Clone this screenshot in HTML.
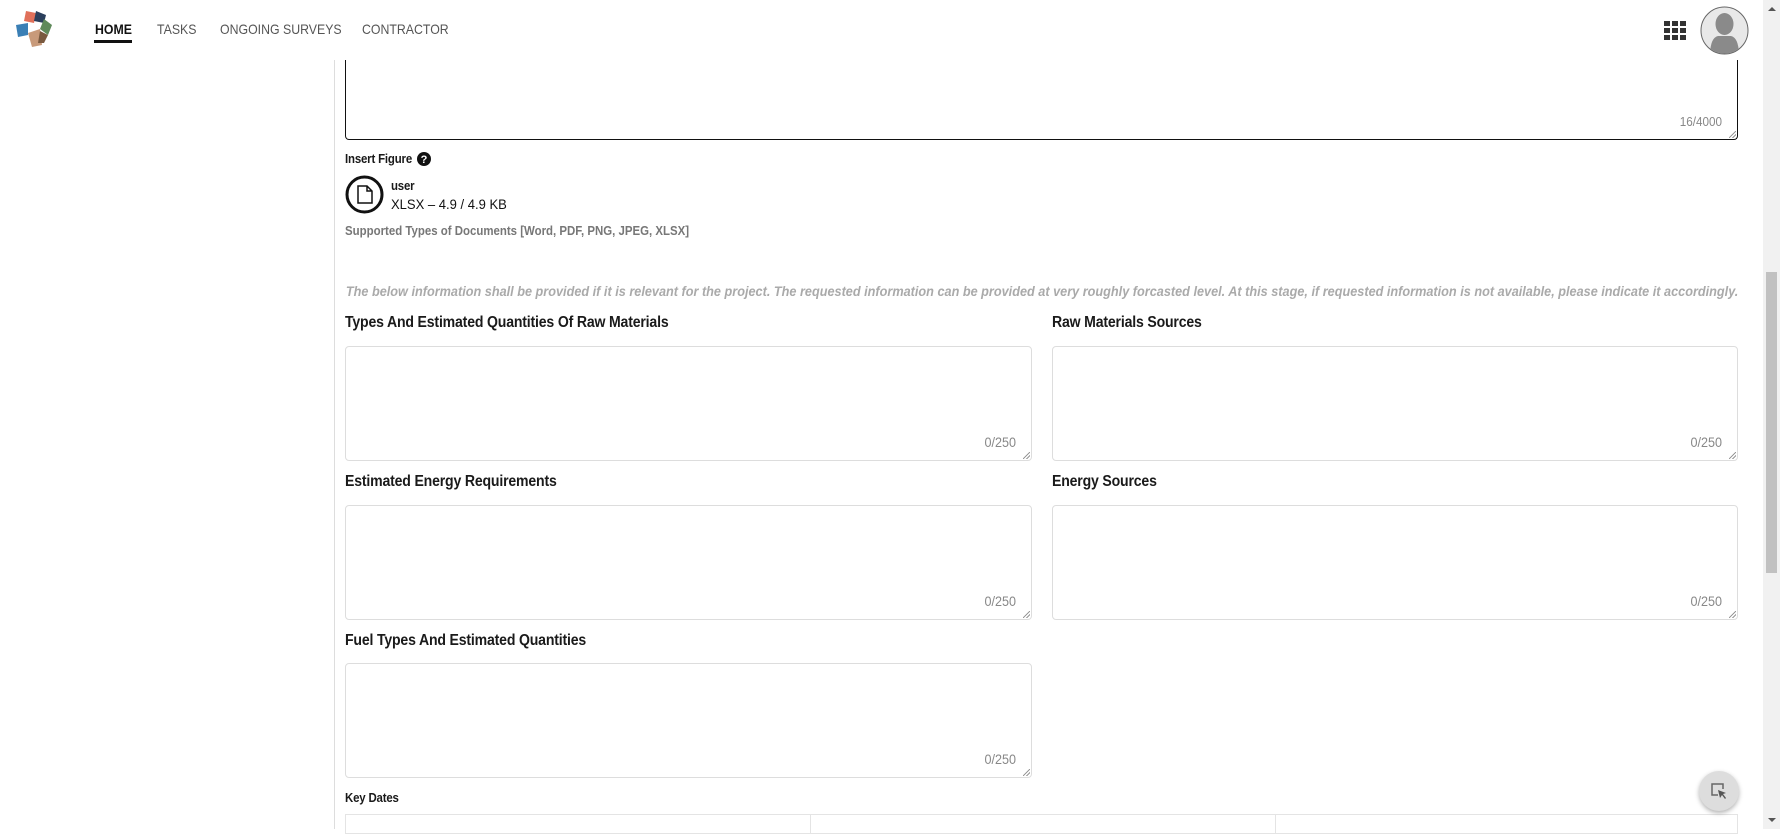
<!DOCTYPE html>
<html><head><meta charset="utf-8"><style>
*{box-sizing:border-box;margin:0;padding:0}
body{width:1780px;height:829px;overflow:hidden;background:#fff;font-family:"Liberation Sans",sans-serif;position:relative;color:#222}
.a{position:absolute;white-space:nowrap}
.n{transform:scaleX(.88);transform-origin:left center}
.nav{font-size:14px;color:#555;top:21px}
.lbl{font-weight:bold;font-size:16px;color:#1a1a1a;letter-spacing:-0.2px}
.ta{position:absolute;border:1px solid #ddd;border-radius:4px;background:#fff}
.cnt{position:absolute;right:15px;bottom:10px;font-size:14px;color:#888;transform:scaleX(.9);transform-origin:right center}
.rs{position:absolute;right:1px;bottom:1px;width:7px;height:7px;background:linear-gradient(135deg,transparent 45%,#999 46%,#999 55%,transparent 56%,transparent 70%,#999 71%,#999 80%,transparent 81%)}
</style></head><body>
<svg class="a" style="left:14px;top:9px" width="40" height="40" viewBox="0 0 40 40">
<polygon points="12,2 22,4 20,14 10,12" fill="#e0705a"/>
<polygon points="22,2 32,6 30,14 20,12" fill="#2b3f5c"/>
<polygon points="30,10 38,16 34,26 26,20" fill="#5f8a5a"/>
<polygon points="2,16 14,14 14,26 4,28" fill="#3a7fb5"/>
<polygon points="14,24 26,20 28,36 18,38" fill="#c89a7a"/>
<polygon points="26,22 34,26 30,34 24,34" fill="#7a5a40"/>
</svg>
<div class="a nav n" style="left:95px;font-weight:bold;color:#111">HOME</div>
<div class="a" style="left:94px;top:40px;width:38px;height:3px;background:#111"></div>
<div class="a nav n" style="left:157px">TASKS</div>
<div class="a nav n" style="left:220px">ONGOING SURVEYS</div>
<div class="a nav n" style="left:362px">CONTRACTOR</div>
<svg class="a" style="left:1664px;top:21px" width="22" height="20" viewBox="0 0 22 20" fill="#333">
<rect x="0" y="0" width="6" height="5"/><rect x="8" y="0" width="6" height="5"/><rect x="16" y="0" width="6" height="5"/>
<rect x="0" y="7" width="6" height="5"/><rect x="8" y="7" width="6" height="5"/><rect x="16" y="7" width="6" height="5"/>
<rect x="0" y="14" width="6" height="5"/><rect x="8" y="14" width="6" height="5"/><rect x="16" y="14" width="6" height="5"/>
</svg>
<svg class="a" style="left:1700px;top:6px" width="49" height="49" viewBox="0 0 49 49">
<defs><clipPath id="c"><circle cx="24.5" cy="24.5" r="23"/></clipPath></defs>
<circle cx="24.5" cy="24.5" r="23.5" fill="#e8e8e8" stroke="#666" stroke-width="1"/>
<g clip-path="url(#c)" fill="#8a8a8a"><ellipse cx="24.5" cy="18" rx="9" ry="11"/><path d="M10 50 Q10 32 18 30 L31 30 Q39 32 39 50Z"/></g>
</svg>
<div class="a" style="left:334px;top:60px;width:1px;height:769px;background:#ddd"></div>
<div class="ta" style="left:345px;top:60px;width:1393px;height:80px;border:1.5px solid #111;border-top:none;border-radius:0 0 4px 4px"><div class="cnt" style="font-size:13px">16/4000</div><div class="rs"></div></div>
<div class="a lbl n" style="left:345px;top:151px;font-size:13px">Insert Figure</div>
<svg class="a" style="left:417px;top:152px" width="14" height="14" viewBox="0 0 14 14"><circle cx="7" cy="7" r="7" fill="#111"/><text x="7" y="11" font-size="11" font-weight="bold" fill="#fff" text-anchor="middle" font-family="Liberation Sans">?</text></svg>
<svg class="a" style="left:345px;top:175px" width="39" height="39" viewBox="0 0 39 39"><circle cx="19.5" cy="19.5" r="17.5" fill="none" stroke="#111" stroke-width="3"/><path d="M13 11 H22 L27 16 V28 H13 Z M22 11 V16 H27" fill="none" stroke="#111" stroke-width="1.5"/></svg>
<div class="a lbl n" style="left:391px;top:178px;font-size:13px">user</div>
<div class="a" style="left:391px;top:196px;font-size:14px;color:#111;transform:scaleX(.93);transform-origin:left">XLSX – 4.9 / 4.9 KB</div>
<div class="a n" style="left:345px;top:223px;font-size:13px;color:#777;font-weight:bold">Supported Types of Documents [Word, PDF, PNG, JPEG, XLSX]</div>
<div class="a" style="right:42px;top:284px;font-size:13.5px;color:#aaa;font-style:italic;font-weight:bold;transform:scaleX(.94);transform-origin:right center">The below information shall be provided if it is relevant for the project. The requested information can be provided at very roughly forcasted level. At this stage, if requested information is not available, please indicate it accordingly.</div>
<div class="a lbl n" style="left:345px;top:314px">Types And Estimated Quantities Of Raw Materials</div>
<div class="a lbl n" style="left:1052px;top:314px">Raw Materials Sources</div>
<div class="ta" style="left:345px;top:346px;width:687px;height:115px"><div class="cnt">0/250</div><div class="rs"></div></div>
<div class="ta" style="left:1052px;top:346px;width:686px;height:115px"><div class="cnt">0/250</div><div class="rs"></div></div>
<div class="a lbl n" style="left:345px;top:473px">Estimated Energy Requirements</div>
<div class="a lbl n" style="left:1052px;top:473px">Energy Sources</div>
<div class="ta" style="left:345px;top:505px;width:687px;height:115px"><div class="cnt">0/250</div><div class="rs"></div></div>
<div class="ta" style="left:1052px;top:505px;width:686px;height:115px"><div class="cnt">0/250</div><div class="rs"></div></div>
<div class="a lbl n" style="left:345px;top:632px">Fuel Types And Estimated Quantities</div>
<div class="ta" style="left:345px;top:663px;width:687px;height:115px"><div class="cnt">0/250</div><div class="rs"></div></div>
<div class="a lbl n" style="left:345px;top:790px;font-size:13px">Key Dates</div>
<div class="a" style="left:345px;top:814px;width:1393px;height:20px;border:1px solid #e4e4e4"></div>
<div class="a" style="left:810px;top:814px;width:1px;height:20px;background:#e4e4e4"></div>
<div class="a" style="left:1275px;top:814px;width:1px;height:20px;background:#e4e4e4"></div>
<div class="a" style="left:1699px;top:771px;width:40px;height:40px;border-radius:50%;background:#ddd;box-shadow:0 2px 5px rgba(0,0,0,.3)"></div>
<svg class="a" style="left:1710px;top:782px" width="18" height="18" viewBox="0 0 18 18"><path d="M8 13 H2 V2 H13 V7" fill="none" stroke="#666" stroke-width="1.5"/><path d="M8 8 L16 11 L13 12 L16 16 L15 17 L12 13 L10 16 Z" fill="#555"/></svg>
<div class="a" style="left:1763px;top:0;width:17px;height:829px;background:#f1f1f1"></div>
<div class="a" style="left:1766px;top:272px;width:11px;height:301px;background:#c1c1c1"></div>
<div class="a" style="left:1768px;top:7px;width:0;height:0;border-left:4px solid transparent;border-right:4px solid transparent;border-bottom:4px solid #555"></div>
<div class="a" style="left:1768px;top:818px;width:0;height:0;border-left:4px solid transparent;border-right:4px solid transparent;border-top:4px solid #555"></div>
</body></html>
